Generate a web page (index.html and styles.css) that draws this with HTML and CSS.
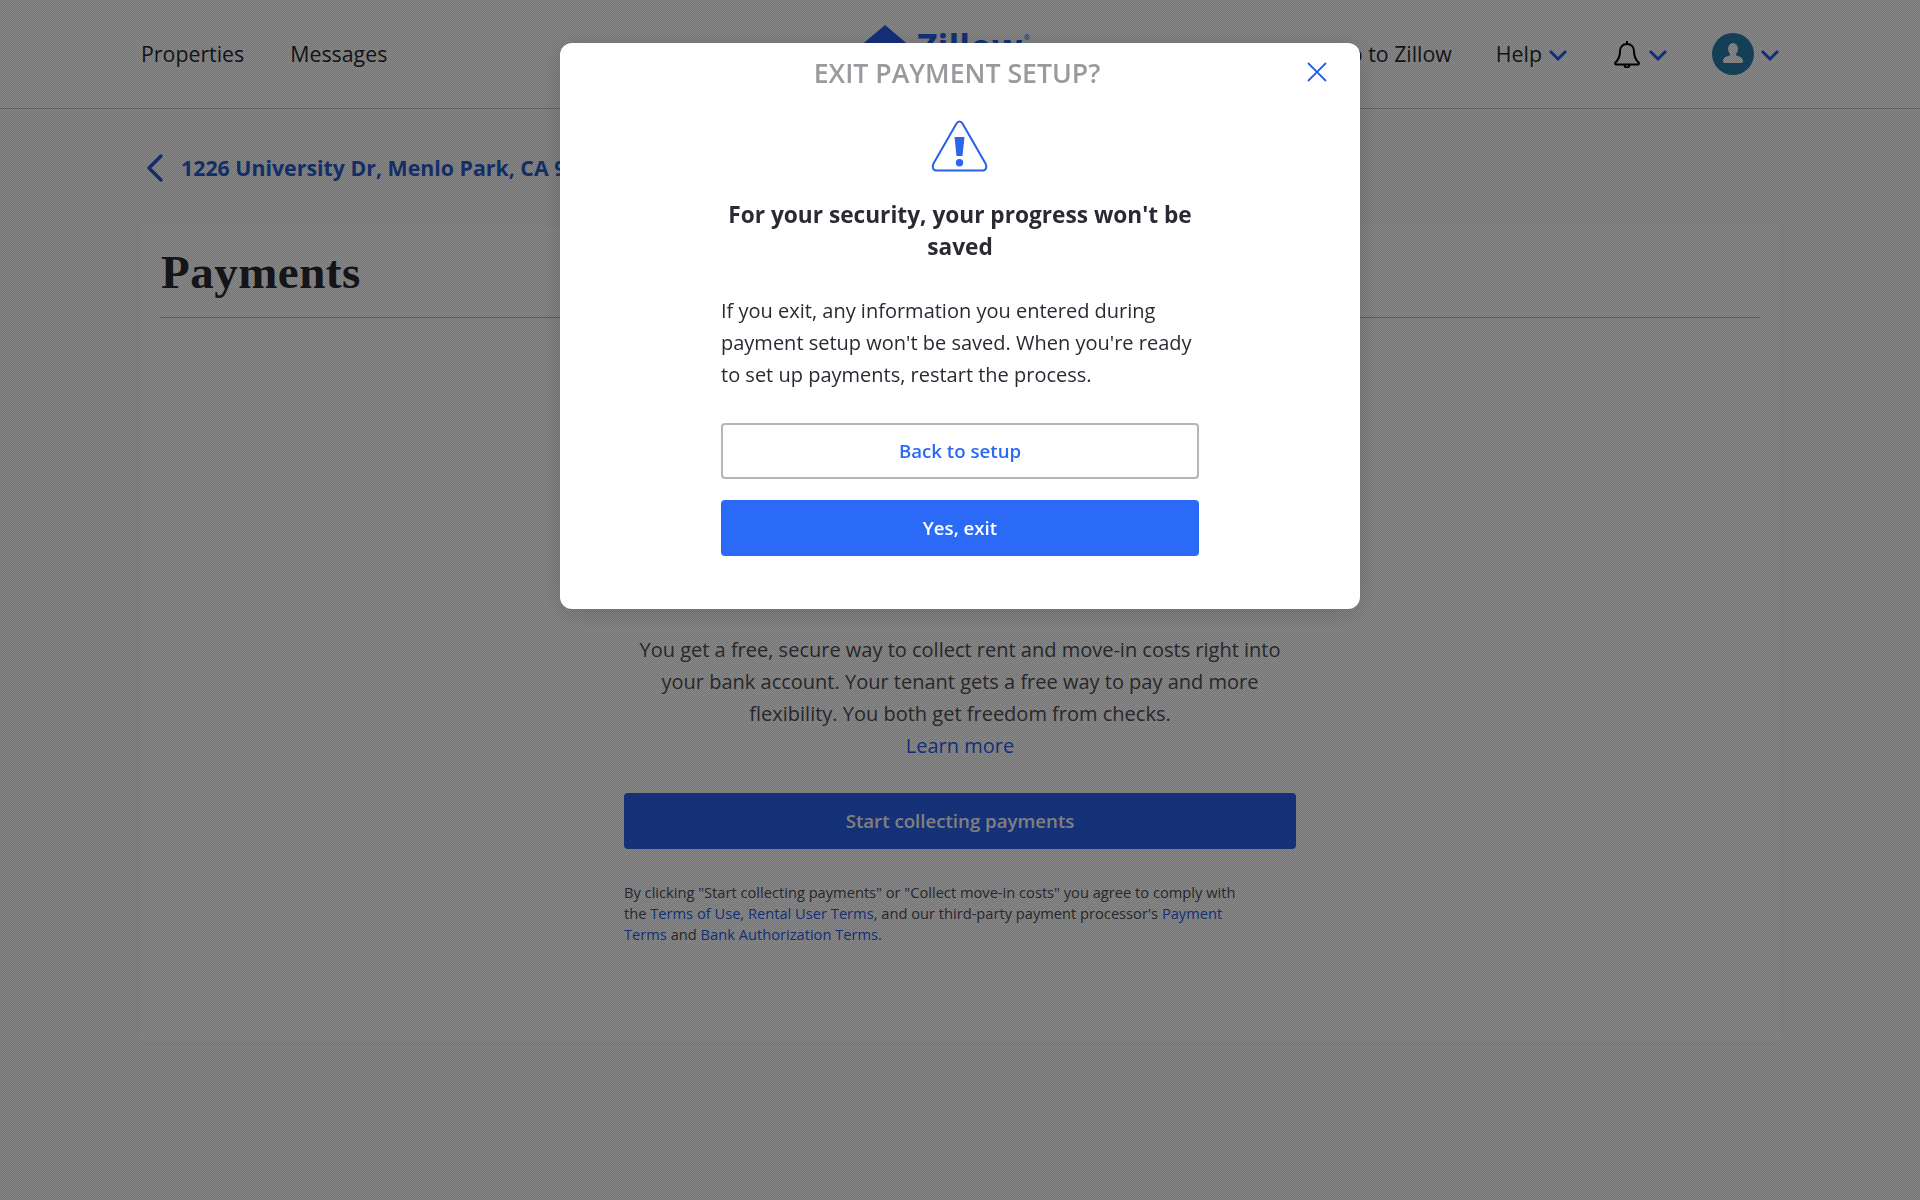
FILE: index.html
```html
<!DOCTYPE html>
<html lang="en">
<head>
  <meta charset="UTF-8">
  <meta name="viewport" content="width=device-width, initial-scale=1.0">
  <title>Payments - Exit payment setup</title>
  <link rel="stylesheet" href="styles.css">
</head>
<body>
  <header class="topbar">
    <nav class="nav-left">
      <a href="#">Properties</a>
      <a href="#">Messages</a>
    </nav>
    <a href="#" class="logo">
      <svg width="52" height="46" viewBox="0 0 52 46"><path fill="#2a5fe8" d="M26 0 52 22V46H0V22Z"/></svg>
      <span>Zillow</span><sup>&reg;</sup>
    </a>
    <nav class="nav-right">
      <a href="#">Go to Zillow</a>
      <a href="#" class="nav-drop help-drop">Help
        <svg class="chev" width="20" height="12" viewBox="0 0 20 12"><path d="M2 2l8 8 8-8"/></svg>
      </a>
      <a href="#" class="nav-drop bell-drop">
        <svg width="26" height="28" viewBox="0 0 26 28" fill="none" stroke="#000" stroke-width="2"><path d="M13 1v3M13 4c-4.500 0-7 3.200-7 7.500 0 5-1.500 8-4.500 11-.8.8-.3 2 .8 2h21.400c1.100 0 1.600-1.200.8-2-3-3-4.500-6-4.500-11C20 7.200 17.500 4 13 4zM10.500 25a2.500 2.500 0 0 0 5 0"/></svg>
        <svg class="chev" width="20" height="12" viewBox="0 0 20 12"><path d="M2 2l8 8 8-8"/></svg>
      </a>
      <a href="#" class="nav-drop user-drop">
        <span class="avatar">
          <svg width="20" height="20" viewBox="0 0 20 20" fill="#fff"><ellipse cx="10" cy="6" rx="5" ry="6"/><path d="M2 20c-1.200 0-2-.6-2-2 0-3 3-5 7-5.500v-2h6v2c4 .5 7 2.500 7 5.500 0 1.400-.8 2-2 2z"/></svg>
        </span>
        <svg class="chev" width="20" height="12" viewBox="0 0 20 12"><path d="M2 2l8 8 8-8"/></svg>
      </a>
    </nav>
  </header>

  <main class="page">
    <a href="#" class="back-link">
      <svg width="20" height="30" viewBox="0 0 20 30" fill="none" stroke="#2b5cc8" stroke-width="3.500" stroke-linecap="round" stroke-linejoin="round"><path d="M16 3 4 15l12 12"/></svg>
      1226 University Dr, Menlo Park, CA 94025
    </a>

    <section class="card">
      <h1>Payments</h1>
      <div class="intro">
        <p class="intro-text">You get a free, secure way to collect rent and move-in costs right into your bank account. Your tenant gets a free way to pay and more flexibility. You both get freedom from checks.<br><a href="#">Learn more</a></p>
        <button class="btn btn-primary start-btn">Start collecting payments</button>
        <p class="legal">By clicking "Start collecting payments" or "Collect move-in costs" you agree to comply with the <a href="#">Terms of Use</a>, <a href="#">Rental User Terms</a>, and our third-party payment processor's <a href="#">Payment Terms</a> and <a href="#">Bank Authorization Terms.</a></p>
      </div>
    </section>
  </main>

  <div class="overlay">
    <div class="modal">
      <div class="modal-title">
        <h2>EXIT PAYMENT SETUP?</h2>
        <button class="close-btn" aria-label="Close">
          <svg width="20" height="20" viewBox="0 0 20 20" stroke="#2a5fe8" stroke-width="1.800"><path d="M1 1l18 18M19 1 1 19"/></svg>
        </button>
      </div>
      <svg class="warn-icon" width="60" height="54" viewBox="0 0 60 54" fill="none">
        <path stroke="#2a5fe8" stroke-width="2" stroke-linejoin="round" d="M26.500 3.500c1.500-2.700 4.500-2.700 6 0l23 40c1.800 3.500.5 7-3 7H6.500c-3.500 0-4.800-3.500-3-7z"/>
        <path fill="#2a66ee" d="M24.500 17h10l-2 19h-6zM29.500 39a3.700 3.700 0 1 1 0 7.400 3.700 3.700 0 0 1 0-7.400z"/>
      </svg>
      <div class="modal-body">
        <h3>For your security, your progress won't be saved</h3>
        <p>If you exit, any information you entered during payment setup won't be saved. When you're ready to set up payments, restart the process.</p>
        <button class="btn btn-outline">Back to setup</button>
        <button class="btn btn-primary">Yes, exit</button>
      </div>
    </div>
  </div>
</body>
</html>
```

FILE: styles.css
```css
* {
  box-sizing: border-box;
}

body {
  margin: 0;
  min-height: 1200px;
  background-color: #fbfbfb;
  font-family: "Open Sans", sans-serif;
  font-size: 20px;
  color: #2a2a33;
}

a {
  color: #2a5fe8;
  text-decoration: none;
}

.topbar {
  height: 109px;
  padding: 0 140px 0 141px;
  display: flex;
  align-items: center;
  justify-content: space-between;
  position: relative;
  background-color: #fff;
  border-bottom: 1px solid #c8c8cc;
}

.topbar a {
  color: #2a2a33;
  font-size: 21.330px;
  padding-bottom: 2px;
}

.nav-left {
  display: flex;
  gap: 46px;
}

.nav-right {
  display: flex;
  align-items: center;
  gap: 44px;
}

.nav-drop {
  display: flex;
  align-items: center;
  gap: 7px;
}

.help-drop {
  gap: 6px;
}

.help-drop .chev {
  margin-top: 4px;
}

.topbar .bell-drop {
  gap: 8px;
  margin-left: 2px;
  padding-bottom: 0;
}

.topbar .user-drop {
  gap: 6px;
  padding-bottom: 0;
}

.chev {
  fill: none;
  stroke: #2a5fe8;
  stroke-width: 3;
  margin-top: 2px;
}

.avatar {
  width: 42px;
  height: 42px;
  border-radius: 50%;
  background-color: #2d7ea8;
  display: flex;
  align-items: center;
  justify-content: center;
  padding-bottom: 2px;
}

.logo {
  position: absolute;
  left: 859px;
  top: 23px;
  display: flex;
  align-items: flex-start;
}

.logo svg {
  margin: 2px 6px 0 0;
}

.topbar .logo span {
  font-size: 35.500px;
  font-weight: 700;
  line-height: 46px;
  color: #2a5fe8;
}

.logo sup {
  font-size: 8px;
  line-height: 12px;
  margin: 8px 0 0 1px;
  color: #2a5fe8;
}

.page {
  padding: 0 140px;
}

.topbar + .page .back-link {
  color: #2b5cc8;
}

.back-link {
  display: flex;
  align-items: center;
  gap: 16px;
  height: 116px;
  padding: 1px 0 0 5px;
  font-size: 21.330px;
  font-weight: 700;
}

.card {
  height: 817px;
  padding: 0 20px;
  background-color: #fff;
  box-shadow: 0 0 6px rgba(0, 0, 0, 0.03);
}

.card h1 {
  margin: 0;
  height: 93px;
  padding: 22px 1px 0;
  font-family: "Liberation Serif", serif;
  font-size: 47px;
  line-height: 50px;
  font-weight: 700;
  letter-spacing: 0.5px;
  border-bottom: 1px solid #b8b8bc;
}

.intro {
  width: 672px;
  margin: 0 auto;
  padding-top: 316px;
  color: #505056;
}

.intro-text {
  margin: 0 0 31px;
  font-size: 20px;
  line-height: 32px;
  text-align: center;
}

.legal {
  max-width: 625px;
  margin: 33px 0 0;
  font-size: 14.670px;
  line-height: 21px;
}

.btn {
  display: block;
  width: 100%;
  height: 56px;
  padding: 0 0 2px;
  border-radius: 4px;
  font-family: inherit;
  font-size: 18.670px;
  font-weight: 600;
  cursor: pointer;
}

.btn-primary {
  border: 0;
  background-color: #2a6af6;
  color: #fff;
}

.start-btn {
  background-color: #2f62e8;
}

.btn-outline {
  border: 2px solid #b5b5b9;
  background-color: #fff;
  color: #2a6af6;
  margin-bottom: 21px;
}

.overlay {
  position: fixed;
  top: 0;
  left: 0;
  width: 100%;
  height: 100%;
  padding-top: 43px;
  display: flex;
  justify-content: center;
  align-items: flex-start;
  background:
    repeating-conic-gradient(rgba(0, 0, 0, 0.12) 0 25%, transparent 0 50%) 0 0 / 2px 2px,
    rgba(0, 0, 0, 0.47);
}

.modal {
  width: 800px;
  height: 566px;
  background-color: #fff;
  border-radius: 12px;
  box-shadow: 0 4px 24px rgba(0, 0, 0, 0.15);
  display: flex;
  flex-direction: column;
  align-items: center;
}

.modal-title {
  width: 100%;
  height: 58px;
  display: flex;
  align-items: center;
  justify-content: center;
  position: relative;
}

.modal-title h2 {
  margin: 0 6px 0 0;
  font-size: 26.670px;
  font-weight: 600;
  color: #9a9a9e;
}

.close-btn {
  position: absolute;
  top: 19px;
  right: 33px;
  padding: 0;
  border: 0;
  background: none;
  line-height: 0;
  cursor: pointer;
}

.warn-icon {
  margin-top: 19px;
  flex-shrink: 0;
}

.modal-body {
  width: 478px;
  margin-top: 25px;
}

.modal-body h3 {
  margin: 0 0 32px;
  font-size: 22.670px;
  line-height: 32px;
  font-weight: 700;
  text-align: center;
}

.modal-body p {
  margin: 0 0 32px;
  font-size: 20px;
  line-height: 32px;
}
```
